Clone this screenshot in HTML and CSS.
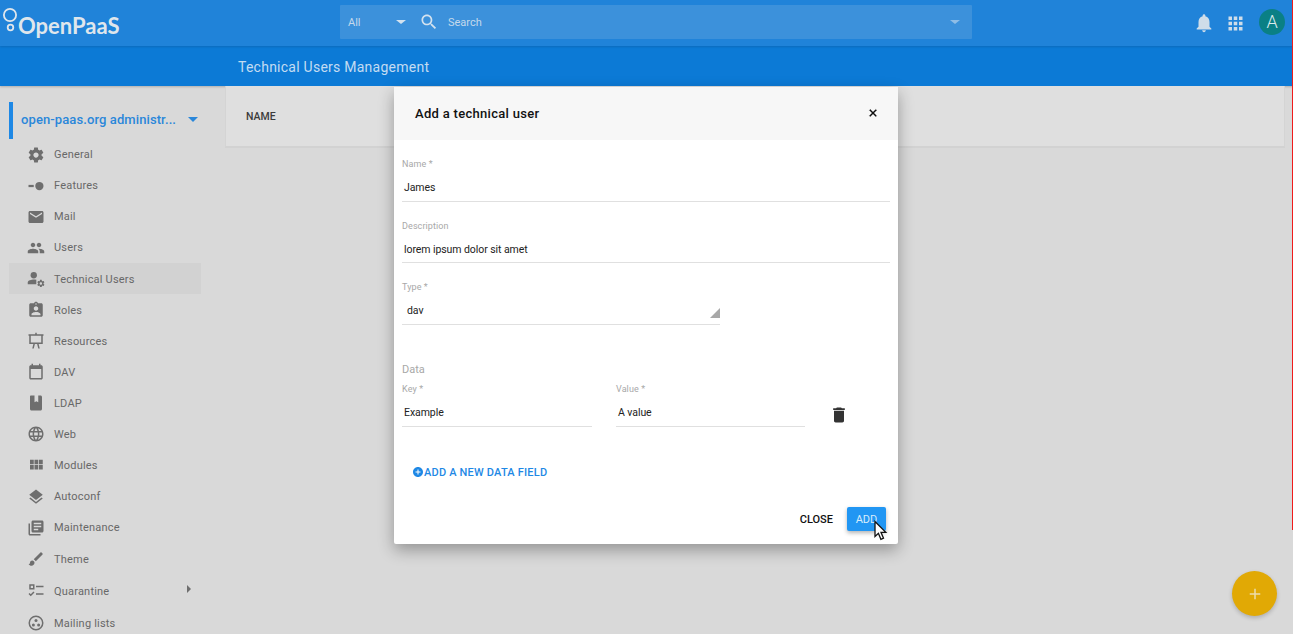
FILE: index.html
```html
<!DOCTYPE html>
<html>

<head>
    <title>Technical Users Management</title>
    <link rel="stylesheet" href="styles.css">
</head>

<body>
    <header class="topbar">
        <div class="logo">
            <svg class="logo-rings" width="18" height="46" viewBox="0 0 18 46">
                <circle cx="10" cy="15" r="6.1"></circle>
                <circle cx="10.5" cy="27.5" r="2.8"></circle>
            </svg>
            <span class="logo-text">OpenPaaS</span>
        </div>
        <div class="search">
            <span class="search-scope">All</span>
            <span class="caret caret-scope"></span>
            <svg class="search-icon" viewBox="0 0 24 24"><path d="M15.5 14h-.79l-.28-.27C15.41 12.59 16 11.11 16 9.5 16 5.91 13.09 3 9.5 3S3 5.91 3 9.5 5.91 16 9.5 16c1.61 0 3.09-.59 4.23-1.57l.27.28v.79l5 4.99L20.49 19l-4.99-5zm-6 0C7.01 14 5 11.99 5 9.5S7.01 5 9.5 5 14 7.01 14 9.5 11.99 14 9.5 14z"/></svg>
            <span class="search-text">Search</span>
            <span class="caret caret-end"></span>
        </div>
        <div class="top-actions">
            <svg class="top-icon icon-bell" viewBox="0 0 24 24"><path d="M12 22c1.1 0 2-.9 2-2h-4c0 1.1.89 2 2 2zm6-6v-5c0-3.07-1.64-5.64-4.5-6.32V4c0-.83-.67-1.5-1.5-1.5s-1.5.67-1.5 1.5v.68C7.63 5.36 6 7.92 6 11v5l-2 2v1h16v-1l-2-2z"/></svg>
            <svg class="top-icon icon-apps" viewBox="0 0 24 24"><path d="M4 8h4V4H4v4zm6 12h4v-4h-4v4zm-6 0h4v-4H4v4zm0-6h4v-4H4v4zm6 0h4v-4h-4v4zm6-10v4h4V4h-4zm-6 4h4V4h-4v4zm6 6h4v-4h-4v4zm0 6h4v-4h-4v4z"/></svg>
            <span class="avatar">A</span>
        </div>
    </header>

    <div class="subheader">Technical Users Management</div>

    <div class="main">
        <nav class="sidebar">
            <div class="domain">
                <span class="domain-name">open-paas.org administr...</span>
                <span class="caret caret-domain"></span>
            </div>
            <a class="item"><svg viewBox="0 0 24 24"><path d="M19.43 12.98c.04-.32.07-.64.07-.98s-.03-.66-.07-.98l2.11-1.65c.19-.15.24-.42.12-.64l-2-3.46c-.12-.22-.39-.3-.61-.22l-2.49 1c-.52-.4-1.08-.73-1.69-.98l-.38-2.65C14.46 2.18 14.25 2 14 2h-4c-.25 0-.46.18-.49.42l-.38 2.65c-.61.25-1.17.59-1.69.98l-2.49-1c-.23-.09-.49 0-.61.22l-2 3.46c-.13.22-.07.49.12.64l2.11 1.65c-.04.32-.07.65-.07.98s.03.66.07.98l-2.11 1.65c-.19.15-.24.42-.12.64l2 3.46c.12.22.39.3.61.22l2.49-1c.52.4 1.08.73 1.69.98l.38 2.65c.03.24.24.42.49.42h4c.25 0 .46-.18.49-.42l.38-2.65c.61-.25 1.17-.59 1.69-.98l2.49 1c.23.09.49 0 .61-.22l2-3.46c.12-.22.07-.49-.12-.64l-2.11-1.65zM12 15.5c-1.93 0-3.5-1.57-3.5-3.5s1.57-3.5 3.5-3.5 3.5 1.57 3.5 3.5-1.57 3.5-3.5 3.5z"/></svg>General</a>
            <a class="item"><svg viewBox="0 0 24 24"><path d="M2 10.5h7v3H2z"/><circle cx="16.5" cy="12" r="5.5"/></svg>Features</a>
            <a class="item"><svg viewBox="0 0 24 24"><path d="M20 4H4c-1.1 0-1.99.9-1.99 2L2 18c0 1.1.9 2 2 2h16c1.1 0 2-.9 2-2V6c0-1.1-.9-2-2-2zm0 4l-8 5-8-5V6l8 5 8-5v2z"/></svg>Mail</a>
            <a class="item"><svg viewBox="0 0 24 24"><path d="M16 11c1.66 0 2.99-1.34 2.99-3S17.66 5 16 5c-1.66 0-3 1.34-3 3s1.34 3 3 3zm-8 0c1.66 0 2.99-1.34 2.99-3S9.66 5 8 5C6.34 5 5 6.34 5 8s1.34 3 3 3zm0 2c-2.33 0-7 1.17-7 3.5V19h14v-2.5c0-2.33-4.67-3.5-7-3.5zm8 0c-.29 0-.62.02-.97.05 1.16.84 1.97 1.97 1.97 3.45V19h6v-2.5c0-2.33-4.67-3.5-7-3.5z"/></svg>Users</a>
            <a class="item active"><svg viewBox="0 0 24 24"><circle cx="9" cy="7" r="4.2"/><path d="M1 19v-2.5c0-2.6 5-3.8 8-3.8 1 0 2.2.1 3.4.4V19z"/><path transform="translate(12.7 12.2) scale(.48)" d="M19.43 12.98c.04-.32.07-.64.07-.98s-.03-.66-.07-.98l2.11-1.65c.19-.15.24-.42.12-.64l-2-3.46c-.12-.22-.39-.3-.61-.22l-2.49 1c-.52-.4-1.08-.73-1.69-.98l-.38-2.65C14.46 2.18 14.25 2 14 2h-4c-.25 0-.46.18-.49.42l-.38 2.65c-.61.25-1.17.59-1.69.98l-2.49-1c-.23-.09-.49 0-.61.22l-2 3.46c-.13.22-.07.49.12.64l2.11 1.65c-.04.32-.07.65-.07.98s.03.66.07.98l-2.11 1.65c-.19.15-.24.42-.12.64l2 3.46c.12.22.39.3.61.22l2.49-1c.52.4 1.08.73 1.69.98l.38 2.65c.03.24.24.42.49.42h4c.25 0 .46-.18.49-.42l.38-2.65c.61-.25 1.17-.59 1.69-.98l2.49 1c.23.09.49 0 .61-.22l2-3.46c.12-.22.07-.49-.12-.64l-2.11-1.65zM12 15.5c-1.93 0-3.5-1.57-3.5-3.5s1.57-3.5 3.5-3.5 3.5 1.57 3.5 3.5-1.57 3.5-3.5 3.5z"/></svg>Technical Users</a>
            <a class="item"><svg viewBox="0 0 24 24"><path d="M19 3h-4.18C14.4 1.84 13.3 1 12 1c-1.3 0-2.4.84-2.82 2H5c-1.1 0-2 .9-2 2v14c0 1.1.9 2 2 2h14c1.1 0 2-.9 2-2V5c0-1.1-.9-2-2-2zm-7 0c.55 0 1 .45 1 1s-.45 1-1 1-1-.45-1-1 .45-1 1-1zm0 4c1.66 0 3 1.34 3 3s-1.34 3-3 3-3-1.34-3-3 1.34-3 3-3zm6 12H6v-1.4c0-2 4-3.1 6-3.1s6 1.1 6 3.1V19z"/></svg>Roles</a>
            <a class="item"><svg viewBox="0 0 24 24"><path fill-rule="evenodd" d="M11 1h2v2h9v2h-1v11h-5.5l1.5 6h-2l-1.5-6h-3L9 22H7l1.5-6H3V5H2V3h9V1zM5 5v9h14V5H5z"/></svg>Resources</a>
            <a class="item"><svg viewBox="0 0 24 24"><path fill-rule="evenodd" d="M6 1h2v2h8V1h2v2h1c1.1 0 2 .9 2 2v15c0 1.1-.9 2-2 2H5c-1.1 0-2-.9-2-2V5c0-1.1.9-2 2-2h1V1zM5 8v12h14V8H5z"/></svg>DAV</a>
            <a class="item"><svg viewBox="0 0 24 24"><path d="M5 2h5v9l2.5-1.5L15 11V2h3c1.1 0 2 .9 2 2v16c0 1.1-.9 2-2 2H6c-1.1 0-2-.9-2-2V3c0-.6.4-1 1-1z"/></svg>LDAP</a>
            <a class="item"><svg viewBox="0 0 24 24"><path d="M11.99 2C6.47 2 2 6.48 2 12s4.47 10 9.99 10C17.52 22 22 17.52 22 12S17.52 2 11.99 2zm6.93 6h-2.95c-.32-1.25-.78-2.45-1.38-3.56 1.84.63 3.37 1.91 4.33 3.56zM12 4.04c.83 1.2 1.48 2.53 1.91 3.96h-3.82c.43-1.43 1.08-2.76 1.91-3.96zM4.26 14C4.1 13.36 4 12.69 4 12s.1-1.36.26-2h3.38c-.08.66-.14 1.32-.14 2 0 .68.06 1.34.14 2H4.26zm.82 2h2.95c.32 1.25.78 2.45 1.38 3.56-1.84-.63-3.37-1.9-4.33-3.56zm2.95-8H5.08c.96-1.66 2.49-2.93 4.33-3.56C8.81 5.55 8.35 6.75 8.03 8zM12 19.96c-.83-1.2-1.48-2.53-1.91-3.96h3.82c-.43 1.43-1.08 2.76-1.91 3.96zM14.34 14H9.66c-.09-.66-.16-1.32-.16-2 0-.68.07-1.35.16-2h4.68c.09.65.16 1.32.16 2 0 .68-.07 1.34-.16 2zm.25 5.56c.6-1.11 1.06-2.31 1.38-3.56h2.95c-.96 1.65-2.49 2.93-4.33 3.56zM16.36 14c.08-.66.14-1.32.14-2 0-.68-.06-1.34-.14-2h3.38c.16.64.26 1.31.26 2s-.1 1.36-.26 2h-3.38z"/></svg>Web</a>
            <a class="item"><svg viewBox="0 0 24 24"><path d="M4 11h5V5H4v6zm0 7h5v-6H4v6zm6 0h5v-6h-5v6zm6 0h5v-6h-5v6zm-6-7h5V5h-5v6zm6-6v6h5V5h-5z"/></svg>Modules</a>
            <a class="item"><svg viewBox="0 0 24 24"><path d="M11.99 18.54l-7.37-5.73L3 14.07l9 7 9-7-1.63-1.27-7.38 5.74zM12 16l7.36-5.73L21 9l-9-7-9 7 1.63 1.27L12 16z"/></svg>Autoconf</a>
            <a class="item"><svg viewBox="0 0 24 24"><path d="M4 6H2v14c0 1.1.9 2 2 2h14v-2H4V6zm16-4H8c-1.1 0-2 .9-2 2v12c0 1.1.9 2 2 2h12c1.1 0 2-.9 2-2V4c0-1.1-.9-2-2-2zm-1 9H9V9h10v2zm-4 4H9v-2h6v2zm4-8H9V5h10v2z"/></svg>Maintenance</a>
            <a class="item item-wide"><svg viewBox="0 0 24 24"><path d="M7 14c-1.66 0-3 1.34-3 3 0 1.31-1.16 2-2 2 .92 1.22 2.49 2 4 2 2.21 0 4-1.79 4-4 0-1.66-1.34-3-3-3zm13.71-9.37l-1.34-1.34c-.39-.39-1.02-.39-1.41 0L9 12.25 11.75 15l8.96-8.96c.39-.39.39-1.03 0-1.41z"/></svg>Theme</a>
            <a class="item item-wide"><svg viewBox="0 0 24 24"><path fill-rule="evenodd" d="M3 3h7v7H3V3zm2 2v3h3V5H5zM12 5h10v2H12zM12 15h10v2H12zM2 16l1.4-1.4L5 16.2l3.6-3.6L10 14l-5 5z"/></svg>Quarantine<span class="arrow"></span></a>
            <a class="item item-wide"><svg viewBox="0 0 24 24"><path fill-rule="evenodd" d="M12 2a10 10 0 1 0 0 20 10 10 0 0 0 0-20zm0 2a8 8 0 1 1 0 16 8 8 0 0 1 0-16z"/><circle cx="12" cy="8.5" r="2"/><circle cx="8.5" cy="14.5" r="2"/><circle cx="15.5" cy="14.5" r="2"/></svg>Mailing lists</a>
        </nav>
        <section class="content">
            <div class="table-card">NAME</div>
        </section>
    </div>

    <div class="modal">
        <div class="modal-header">
            <h2>Add a technical user</h2>
            <svg class="close" viewBox="0 0 24 24"><path d="M19 6.41L17.59 5 12 10.59 6.41 5 5 6.41 10.59 12 5 17.59 6.41 19 12 13.41 17.59 19 19 17.59 13.41 12z"/></svg>
        </div>
        <div class="modal-body">
            <div class="field">
                <label>Name *</label>
                <div class="value">James</div>
            </div>
            <div class="field">
                <label>Description</label>
                <div class="value value-short">lorem ipsum dolor sit amet</div>
            </div>
            <div class="field field-type">
                <label>Type *</label>
                <div class="value value-select">dav<span class="select-corner"></span></div>
            </div>
            <div class="data-title">Data</div>
            <div class="data-row">
                <div class="field field-key">
                    <label>Key *</label>
                    <div class="value">Example</div>
                </div>
                <div class="field field-val">
                    <label>Value *</label>
                    <div class="value">A value</div>
                </div>
                <svg class="trash" viewBox="0 0 24 24"><path d="M6 19c0 1.1.9 2 2 2h8c1.1 0 2-.9 2-2V7H6v12zM19 4h-3.5l-1-1h-5l-1 1H5v2h14V4z"/></svg>
            </div>
            <div class="add-field">
                <svg viewBox="0 0 24 24"><path d="M12 2C6.48 2 2 6.48 2 12s4.48 10 10 10 10-4.48 10-10S17.52 2 12 2zm5 11h-4v4h-2v-4H7v-2h4V7h2v4h4v2z"/></svg>ADD A NEW DATA FIELD
            </div>
        </div>
        <div class="modal-footer">
            <button class="btn">CLOSE</button>
            <button class="btn btn-primary">ADD</button>
        </div>
    </div>

    <svg class="pointer" width="15" height="21" viewBox="0 0 15 21"><path d="M2 1.5v15l3.4-3.2 2.5 6 2.6-1.1-2.5-5.9h4.8z"/></svg>
    <div class="fab">
        <svg viewBox="0 0 24 24"><path d="M19 13h-6v6h-2v-6H5v-2h6V5h2v6h6v2z"/></svg>
    </div>
    <div class="red-line"></div>
</body>

</html>
```

FILE: styles.css
```css
html, body {
    height: 100%;
}

body {
    margin: 0;
    height: 634px;
    overflow: hidden;
    display: flex;
    flex-direction: column;
    background-color: #d9d9d9;
    font-family: Roboto, "Liberation Sans", sans-serif;
    font-size: 12px;
    color: #666666;
}

/* top bar */
.topbar {
    height: 46px;
    flex: none;
    display: flex;
    align-items: center;
    background-color: #2083d9;
    box-shadow: 0 1px 2px rgba(0, 0, 0, 0.12);
    position: relative;
    z-index: 1;
}

.logo {
    width: 340px;
    flex: none;
    display: flex;
    align-items: center;
}

.logo-rings {
    fill: none;
    stroke: #dfe6ec;
    stroke-width: 1.8;
}

.logo-text {
    font-family: Lato, Roboto, sans-serif;
    font-size: 22px;
    font-weight: 700;
    color: #dfe6ec;
    margin-top: 4px;
}

.search {
    width: 632px;
    height: 34px;
    margin-top: -2px;
    flex: none;
    display: flex;
    align-items: center;
    background-color: #3c91db;
    border-radius: 1px;
    padding: 0 12px 0 8px;
    box-sizing: border-box;
    color: #c5d9eb;
    font-size: 11px;
}

.search-scope {
    width: 48px;
}

.caret {
    width: 0;
    height: 0;
    border-left: 5px solid transparent;
    border-right: 5px solid transparent;
    border-top: 4px solid #d3e2ef;
}

.search-icon {
    width: 20px;
    height: 20px;
    margin-left: 13px;
    fill: #d3e2ef;
}

.search-text {
    margin-left: 9px;
    flex: 1;
}

.caret-end {
    border-top-color: #8fbde6;
}

.top-actions {
    flex: 1;
    display: flex;
    align-items: center;
    justify-content: flex-end;
    padding-right: 8px;
}

.top-icon {
    fill: #cfdde9;
}

.icon-bell {
    width: 22px;
    height: 22px;
    margin-right: 10px;
}

.icon-apps {
    width: 21px;
    height: 21px;
    margin-right: 13px;
}

.avatar {
    width: 26px;
    height: 26px;
    margin-top: -2px;
    border-radius: 50%;
    background-color: #0a8085;
    color: #dcebec;
    font-size: 18px;
    font-weight: 300;
    line-height: 26px;
    text-align: center;
}

.subheader {
    height: 40px;
    flex: none;
    background-color: #0c7ad6;
    box-shadow: 0 1px 2px rgba(0, 0, 0, 0.2);
    color: #c3dcf2;
    font-size: 14px;
    letter-spacing: 0.25px;
    line-height: 42px;
    padding-left: 238px;
}

/* main area */
.main {
    flex: 1;
    display: flex;
}

.sidebar {
    width: 225px;
    flex: none;
    padding: 16px 0 0 9px;
    box-sizing: border-box;
}

.domain {
    height: 37px;
    width: 192px;
    border-left: 4px solid #1e88e5;
    box-sizing: border-box;
    padding: 0 0 2px 8px;
    display: flex;
    align-items: center;
    color: #2a87da;
    font-size: 13px;
    font-weight: 500;
    letter-spacing: 0.1px;
}

.domain-name {
    flex: 1;
    white-space: nowrap;
}

.caret-domain {
    border-top: 5px solid #2a87da;
    margin-right: 3px;
}

.item {
    height: 31.1px;
    width: 192px;
    display: flex;
    align-items: center;
    padding-left: 18px;
    box-sizing: border-box;
    font-size: 11px;
    letter-spacing: 0.2px;
    color: #686868;
}

.item svg {
    width: 18px;
    height: 18px;
    fill: #6e6e6e;
    margin-right: 9px;
    flex: none;
}

.item.active {
    background-color: #d2d2d2;
    padding-top: 1px;
}

.item-wide {
    height: 32px;
}

.arrow {
    margin-left: auto;
    margin-right: 10px;
    margin-top: -4px;
    border-top: 4px solid transparent;
    border-bottom: 4px solid transparent;
    border-left: 4px solid #6e6e6e;
}

.content {
    flex: 1;
    padding-right: 8px;
}

.table-card {
    height: 62px;
    box-sizing: border-box;
    background-color: #dfdfdf;
    border-right: 1px solid #d4d4d4;
    border-bottom: 2px solid #d2d2d2;
    border-left: 1px solid #d4d4d4;
    padding: 24px 0 0 20px;
    color: #3b3b3b;
    font-size: 10.5px;
    font-weight: 500;
}

/* dialog */
.modal {
    position: absolute;
    left: 394px;
    top: 87px;
    width: 504px;
    height: 457px;
    display: flex;
    flex-direction: column;
    background-color: #ffffff;
    border-radius: 2px;
    box-shadow: 0 6px 16px rgba(0, 0, 0, 0.32);
    z-index: 2;
}

.modal-header {
    height: 53px;
    flex: none;
    display: flex;
    align-items: center;
    justify-content: space-between;
    padding: 0 19px 0 21px;
    background-color: #f7f7f7;
}

.modal-header h2 {
    margin: 0;
    font-size: 13px;
    font-weight: 500;
    color: #111111;
    letter-spacing: 0.3px;
}

.close {
    width: 12px;
    height: 12px;
    margin-top: -2px;
    stroke: #111111;
    stroke-width: 1;
}

.modal-body {
    flex: 1;
    padding: 18px 8px 0;
}

.field {
    margin-bottom: 18px;
}

.field label {
    display: block;
    height: 12px;
    line-height: 12px;
    font-size: 9px;
    color: #a8a8a8;
    letter-spacing: 0.1px;
}

.value {
    height: 32px;
    box-sizing: border-box;
    padding: 11px 0 0 2px;
    border-bottom: 1px solid #e0e0e0;
    font-size: 10.5px;
    letter-spacing: -0.07px;
    line-height: 14px;
    color: #222222;
}

.value-short {
    height: 31px;
}

.field-type {
    width: 318px;
    margin-bottom: 38px;
}

.value-select {
    position: relative;
    padding-left: 5px;
}

.select-corner {
    position: absolute;
    right: 0;
    bottom: 6px;
    width: 0;
    height: 0;
    border-left: 10px solid transparent;
    border-bottom: 10px solid #a8a8a8;
}

.data-title {
    font-size: 11px;
    line-height: 14px;
    color: #a8a8a8;
    margin-bottom: 6px;
}

.data-row {
    display: flex;
    align-items: flex-start;
    gap: 24px;
}

.field-key {
    width: 190px;
    margin-bottom: 0;
}

.field-val {
    width: 189px;
    margin-bottom: 0;
}

.trash {
    width: 20px;
    height: 20px;
    margin-top: 22px;
    fill: #333333;
}

.add-field {
    display: flex;
    align-items: center;
    margin: 39px 0 0 10px;
    color: #1e88e5;
    font-size: 11px;
    font-weight: 500;
    letter-spacing: 0.2px;
}

.add-field svg {
    width: 12px;
    height: 12px;
    margin-top: -1px;
    fill: #1e88e5;
}

.modal-footer {
    height: 37px;
    flex: none;
    display: flex;
    justify-content: flex-end;
    align-items: flex-start;
    gap: 14px;
    padding-right: 12px;
}

.btn {
    height: 24px;
    border: none;
    border-radius: 2px;
    background: none;
    padding: 0;
    font-family: inherit;
    font-size: 11px;
    font-weight: 500;
    color: #111111;
}

.btn-primary {
    width: 39px;
    background-color: #2196f3;
    color: #d8ecfb;
    font-weight: 400;
    box-shadow: 0 2px 4px rgba(0, 0, 0, 0.3);
}

.pointer {
    position: absolute;
    left: 873px;
    top: 520px;
    fill: #ffffff;
    stroke: #111111;
    stroke-width: 1.3;
    z-index: 3;
}

.fab {
    position: absolute;
    left: 1232px;
    top: 571px;
    width: 45px;
    height: 45px;
    border-radius: 50%;
    background-color: #e1a905;
    box-shadow: 0 2px 4px rgba(0, 0, 0, 0.2);
    display: flex;
    align-items: center;
    justify-content: center;
}

.fab svg {
    width: 18px;
    height: 18px;
    fill: #ecdcae;
}

.red-line {
    position: absolute;
    right: 0;
    top: 0;
    width: 1px;
    height: 530px;
    background-color: #f01c1c;
    z-index: 3;
}
```
